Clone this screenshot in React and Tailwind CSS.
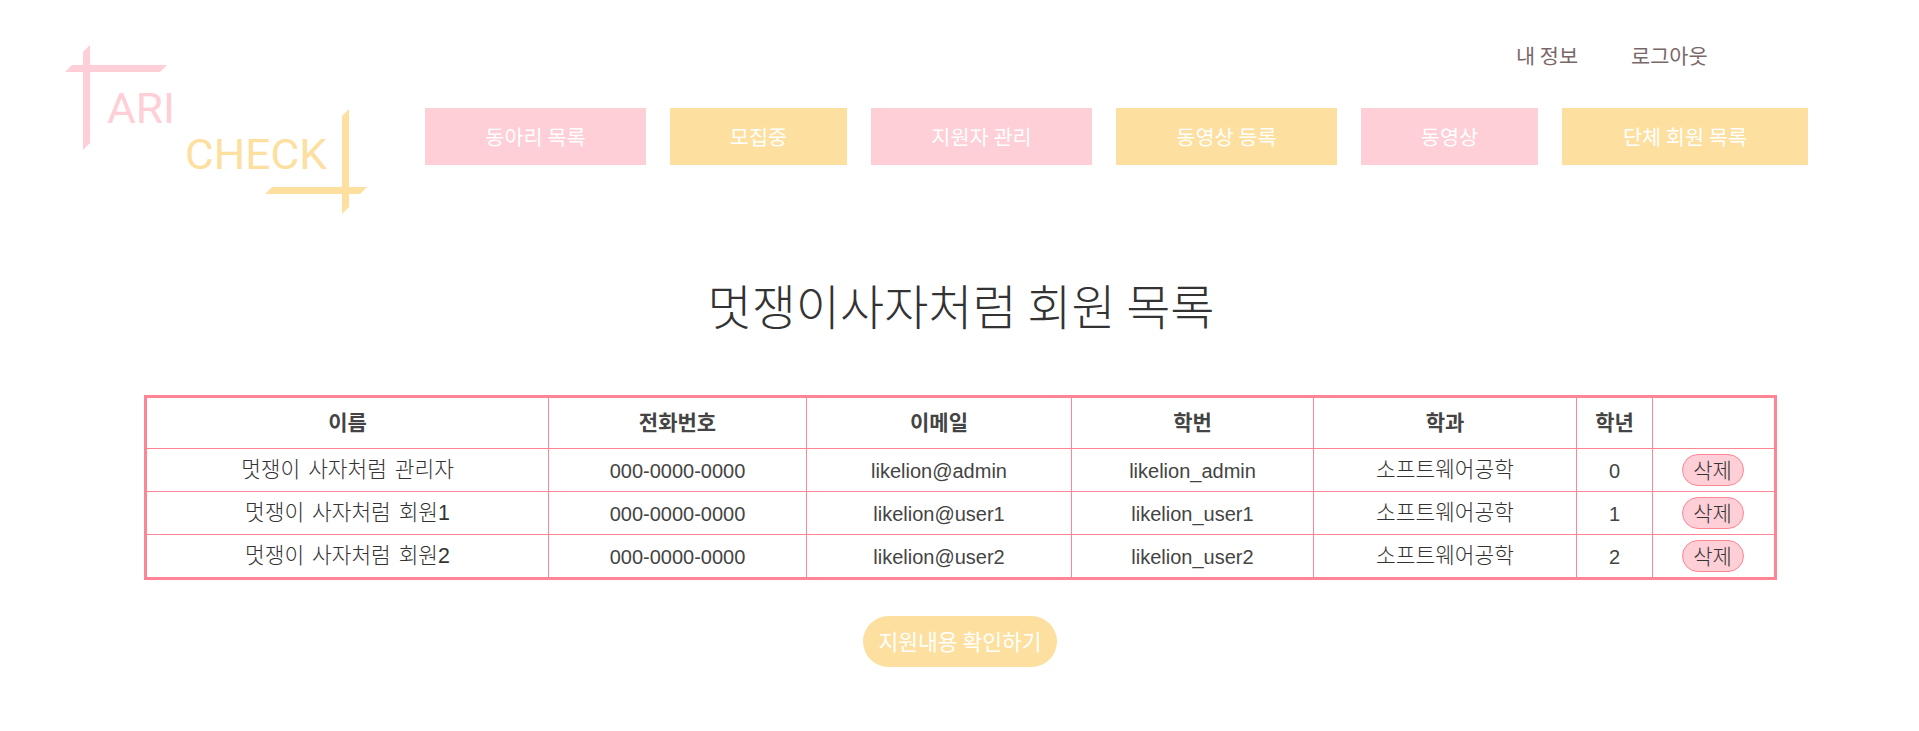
const font = { fontFamily: '"Noto Sans CJK KR", "Noto Sans", sans-serif' };

function Logo() {
  return (
    <svg width="320" height="180" viewBox="0 0 320 180" className="shrink-0 block">
      <polygon points="0,27 7,20 102,20 95,27" fill="#fecfd6" />
      <polygon points="18,7 25,0 25,98 18,105" fill="#fecfd6" />
      <text x="42" y="78" fill="#fecfd6" fontFamily="Roboto, sans-serif" fontWeight="400" fontSize="42" textLength="68" lengthAdjust="spacingAndGlyphs">ARI</text>
      <text x="120" y="124" fill="#fddf9f" fontFamily="Roboto, sans-serif" fontWeight="400" fontSize="43" textLength="142" lengthAdjust="spacingAndGlyphs">CHECK</text>
      <polygon points="277,71 284,64 284,162 277,169" fill="#fddf9f" />
      <polygon points="200,149 207,142 302,142 295,149" fill="#fddf9f" />
    </svg>
  );
}

const navItems = [
  ["동아리 목록", "w-[221px]", "bg-[#fecfd6]"],
  ["모집중", "w-[177px]", "bg-[#fddf9f]"],
  ["지원자 관리", "w-[221px]", "bg-[#fecfd6]"],
  ["동영상 등록", "w-[221px]", "bg-[#fddf9f]"],
  ["동영상", "w-[177px]", "bg-[#fecfd6]"],
  ["단체 회원 목록", "w-[246px]", "bg-[#fddf9f]"],
];

const rows = [
  ["멋쟁이 사자처럼 관리자", "000-0000-0000", "likelion@admin", "likelion_admin", "소프트웨어공학", "0"],
  ["멋쟁이 사자처럼 회원1", "000-0000-0000", "likelion@user1", "likelion_user1", "소프트웨어공학", "1"],
  ["멋쟁이 사자처럼 회원2", "000-0000-0000", "likelion@user2", "likelion_user2", "소프트웨어공학", "2"],
];

const heads = ["이름", "전화번호", "이메일", "학번", "학과", "학년", ""];
const widths = ["w-[403px]", "w-[258px]", "w-[265px]", "w-[242px]", "w-[263px]", "w-[76px]", "w-[123px]"];

export default function App() {
  return (
    <div className="w-[1919px] h-[731px] bg-white overflow-hidden" style={font}>
      <header className="flex pl-[65px] pt-[45px]">
        <Logo />
        <div className="flex flex-col ml-[40px]">
          <div className="flex h-[63px] pl-[1091px] gap-[53px] text-[20.8px] leading-[20px] text-[#7a6868] font-normal">
            <a>내 정보</a>
            <a>로그아웃</a>
          </div>
          <nav className="flex gap-[24px]">
            {navItems.map(([t, w, bg]) => (
              <div key={t} className={`${w} ${bg} h-[57px] flex items-center justify-center text-white text-[20.8px] font-normal`}>{t}</div>
            ))}
          </nav>
        </div>
      </header>

      <h1 className="text-center text-[48px] leading-[70px] font-light text-[#333] mt-[44px] pl-[3px]">멋쟁이사자처럼 회원 목록</h1>

      <div className="mt-[56px] ml-[144px] w-[1630px]">
        <table className="w-[1630px] table-fixed border-collapse border-[3px] border-[#ff8595] text-[#444] text-[20px] font-normal [font-family:'Liberation_Sans','Noto_Sans_CJK_KR',sans-serif]">
          <colgroup>
            {widths.map((w, i) => <col key={i} className={w} />)}
          </colgroup>
          <thead>
            <tr className="h-[52px]">
              {heads.map((h, i) => (
                <th key={i} className="border border-[#ff8595] font-bold p-0 text-[21px]">{h}</th>
              ))}
            </tr>
          </thead>
          <tbody>
            {rows.map((r, rowIndex) => (
              <tr key={r[0]} className={rowIndex === 2 ? "h-[44px]" : "h-[43px]"}>
                {r.map((c, i) => (
                  <td key={i} className={i === 0 || i === 4 ? "border border-[#ff8595] text-center p-0 pt-px text-[21.4px] text-[#333] font-light [word-spacing:2px]" : "border border-[#ff8595] text-center p-0 pt-px"}>{c}</td>
                ))}
                <td className="border border-[#ff8595] text-center p-0">
                  <button className="w-[62px] h-[32px] mr-[2px] rounded-full bg-[#fecfd6] border border-[#ff8595] text-[#333] text-[21px] font-light leading-none">삭제</button>
                </td>
              </tr>
            ))}
          </tbody>
        </table>
      </div>

      <div className="flex justify-center mt-[36px]">
        <button className="w-[194px] h-[51px] ml-px rounded-full bg-[#fddf9f] text-white text-[21.5px] font-normal">지원내용 확인하기</button>
      </div>
    </div>
  );
}
